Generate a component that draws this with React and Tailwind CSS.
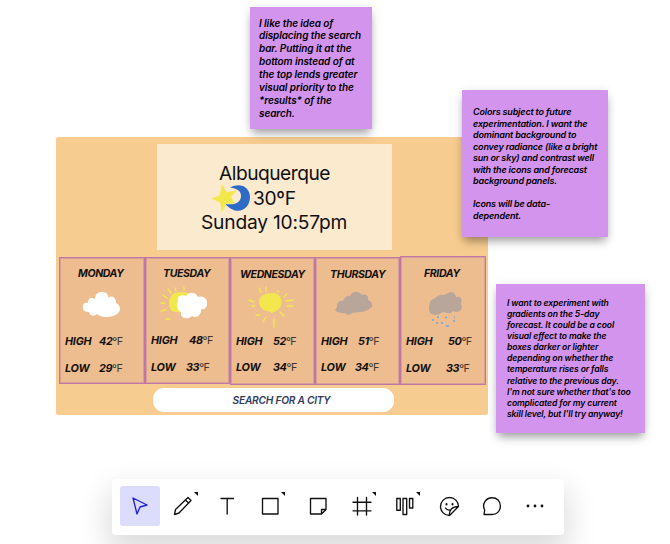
import React from "react";

function Cloud() {
  return (
    <svg width="40" height="28" viewBox="0 0 40 28" fill="#fff">
      <path d="M1 17C0 13 3 11 6 12C6 7 9 6 13 8C13 2 17 1 20 1C25 1 27 4 26 7C30 4 34 6 34 12C38 14 39 18 37 21C34 25 29 26 24 26C20 26 17 25 15 23C12 26 8 25 7 21C4 21 1 20 1 17Z" />
    </svg>
  );
}

function PartlySunny() {
  return (
    <svg width="50" height="36" viewBox="0 0 50 36">
      <g stroke="#f2e74d" strokeWidth="1.3" strokeLinecap="round">
        <path d="M24 1V4M15 2L16 5M8 3L11 7M3 9L7 12M1 17H5M1 25L6 24M6 33H10" />
      </g>
      <path d="M9 16C10 8 15 6 22 6C29 6 31 9 31 15C30 24 24 27 17 26C10 26 9 22 9 16Z" fill="#f2e74d" />
      <path d="M18 15C17 10 21 8 26 10C29 5 36 6 38 11C43 9 48 13 47 18C47 22 44 24 41 23C42 29 36 33 32 30C28 34 20 33 21 26C17 24 16 19 18 15Z" fill="#fff" />
    </svg>
  );
}

function Sun() {
  return (
    <svg width="48" height="44" viewBox="0 0 48 44">
      <path d="M12.5 14C15 9 21 8 26 8C32 8 35 13 34.5 18C34 24 29 26 25 28L21 26C15 26 11 20 12.5 14Z" fill="#f2e74d" />
      <path d="M12 3L14 7M19 2V6M31 6L32 7M40 9L37 12M46 15L39 16M46 21H40M33 27L37 31M27 34V42M19 32L16 37M13 30H9M8 21H5M2 15L7 17" stroke="#f2e74d" strokeWidth="1.4" strokeLinecap="round" />
    </svg>
  );
}

function GreyCloud() {
  return (
    <svg width="40" height="27" viewBox="0 0 40 27" fill="#b8a69b">
      <path d="M1 20C3 18 3 17 3 15C4 12 6 10 9 11C10 8 12 6 16 6C18 1 24 0 28 5C33 3 35 8 34 10C37 11 39 14 38 17C35 19 33 21 28 22C23 22 20 23 18 23C16 25 13 26 11 23C7 23 3 23 1 20Z" />
    </svg>
  );
}

function Rain() {
  return (
    <svg width="36" height="38" viewBox="0 0 36 38">
      <path d="M2 23C0 18 1 9 6 9C9 7 11 4 15 5C19 5 22 0 26 3C28 5 27 7 29 7C34 6 34 11 33 14C35 18 33 22 28 22C26 21 24 21 23 23C20 24 17 22 15 22C11 24 8 27 2 23Z" fill="#b8a69b" />
      <path d="M5 29V31M9 27H11M8 33H10M13 33H15M17 27.5H19M18 36H21M26 27.5H27M25 31H27" stroke="#6ea5e4" strokeWidth="1.5" />
    </svg>
  );
}

function StarMoon() {
  return (
    <svg width="42" height="31" viewBox="0 0 42 31">
      <path d="M19 4.5C29-1 39 4 39 14C39 27 25 34 14 20.5C22 23 30 20 30 13C30 8 27 6 19 4.5Z" fill="#2d6bc5" />
      <path d="M11 1L15.5 9L26 7.5L20 13.5L23.5 20.5L15.5 20.5L11 29L9 19.5L0 15.5L8.5 12.5Z" fill="#f2e74d" />
    </svg>
  );
}

const days = [
  { name: "MONDAY", Icon: Cloud, high: "42", low: "29", card: "mt-px h-[127px] w-[86px] pt-[10px]", title: "pl-[13px]", icon: "h-[56px] pl-[17px] pt-[11px]", highGap: "w-[34px]", lowGap: "w-[34px]", rowGap: "gap-[15px]" },
  { name: "TUESDAY", Icon: PartlySunny, high: "48", low: "33", card: "mt-px h-[127px] w-[85px] pt-[10px]", title: "pl-[12px]", icon: "h-[55px] pl-[9px] pt-[6px]", highGap: "w-[38px]", lowGap: "w-[35px]", rowGap: "gap-[15px]" },
  { name: "WEDNESDAY", Icon: Sun, high: "52", low: "34", card: "mt-px h-[128px] w-[85px] pt-[11px]", title: "pl-1", icon: "h-[55px] pl-[11px] pt-[4px]", highGap: "w-[37px]", lowGap: "w-[37px]", rowGap: "gap-[14px]" },
  { name: "THURSDAY", Icon: GreyCloud, high: "51", low: "34", card: "mt-px h-[128px] w-[85px] pt-[11px]", title: "pl-[9px]", icon: "h-[55px] pl-[13px] pt-[9px]", highGap: "w-[37px]", lowGap: "w-[34px]", rowGap: "gap-[14px]" },
  { name: "FRIDAY", Icon: Rain, high: "50", low: "33", card: "h-[129px] w-[86px] pt-[11px]", title: "pl-[18px]", icon: "h-[56px] pl-[22px] pt-[10px]", highGap: "w-[42px]", lowGap: "w-[40px]", rowGap: "gap-[15px]" },
];

function Temp({ label, value, gap }) {
  return (
    <div className="flex h-3 whitespace-nowrap">
      <span className={`${gap} shrink-0 font-bold italic tracking-[-0.2px]`}>{label}</span>
      <span className="tracking-[-0.4px]"><b className="font-bold italic">{value}</b><span className="text-[#40362f]">ºF</span></span>
    </div>
  );
}

function DayCard({ day }) {
  const { Icon } = day;
  return (
    <section className={`shrink-0 border border-[#bf78a5] bg-[#edbd90] pl-[5px] shadow-[inset_0_0_0_1px_rgba(191,120,165,0.45)] ${day.card}`}>
      <h2 className={`h-3 whitespace-nowrap text-[10.5px] font-bold italic tracking-[-0.35px] ${day.title}`}>{day.name}</h2>
      <div className={day.icon}><Icon /></div>
      <div className={`flex flex-col ${day.rowGap}`}>
        <Temp label="HIGH" value={day.high} gap={day.highGap} />
        <Temp label="LOW" value={day.low} gap={day.lowGap} />
      </div>
    </section>
  );
}

function Note({ lines, className }) {
  return (
    <article className={`absolute bg-[#d394ee] font-semibold italic text-black shadow-[0_6px_9px_-2px_rgba(0,0,0,0.35),0_0_10px_rgba(0,0,0,0.07)] ${className}`}>
      {lines.map((line, i) => <p key={i} className="whitespace-pre">{line || " "}</p>)}
    </article>
  );
}

const iconPaths = [
  <path d="M5 4L19 11L12 13L9 20Z" />,
  <path d="M3.5 20.5L4.5 15.5L17 3.5L20 6.5L8 19ZM14.5 6L17.5 9" />,
  <path d="M6 4.5H18.5M12.2 4.5V20" />,
  <path d="M4.5 4.5H20V20H4.5Z" />,
  <path d="M4.5 4.5H20V15.5L15.5 20H4.5ZM20 15.5H15.5V20" />,
  <path d="M7.5 3.5V21M16.5 3.5V21M3 8.2H21M3 16.8H21" />,
  <path d="M3.8 4.5H7.3V16.3H3.8ZM10 4.5H13.7V20.5H10ZM16.5 4.5H19.8V14H16.5Z" />,
  <g><path d="M12.5 21.5A9 9 0 1 1 21.5 12.5L12.5 21.5C12 16 15 12.5 21.5 12.5" /><path d="M8.5 14Q10 16.5 13 16" /><path d="M9.5 10V10.5M15.5 10V10.5" strokeWidth="2" /></g>,
  <path d="M4 20.5L4.7 16C1.5 10 6 3.7 12 3.7C17 3.7 20.4 7 20.4 12C20.4 17 17 20.5 12 20.5Z" />,
  <g fill="currentColor" stroke="none"><circle cx="5" cy="12" r="1.4" /><circle cx="12" cy="12" r="1.4" /><circle cx="19" cy="12" r="1.4" /></g>,
];

const tools = [
  { label: "Select", cell: "w-10", active: true },
  { label: "Pen", cell: "w-[46px]", menu: "right-[8px]" },
  { label: "Text", cell: "w-[41px]" },
  { label: "Shape", cell: "w-[46px]", menu: "right-[8px]" },
  { label: "Note", cell: "w-[49px]" },
  { label: "Frame", cell: "w-[39px]", menu: "right-[5px]" },
  { label: "Cards", cell: "w-[48px]", menu: "right-[9px]" },
  { label: "Sticker", cell: "w-[39px]" },
  { label: "Comment", cell: "w-[47px]" },
  { label: "More", cell: "w-10" },
];

export default function App() {
  return (
    <main className="relative h-[544px] w-[670px] overflow-hidden bg-white font-['Inter','Liberation_Sans',sans-serif]">
      <div className="absolute left-[56px] top-[137px] flex h-[278px] w-[432px] flex-col rounded-[2px] bg-[#f6cc90] pt-[7px]">
        <header className="ml-[101px] h-[106px] w-[235px] bg-[#fceacf] pt-[17px] text-[19.2px] leading-[24.5px] text-[#101014]">
          <p className="ml-[62px] tracking-[-0.5px]">Albuquerque</p>
          <div className="ml-[54px] flex h-[24.5px]">
            <span className="-mt-[3px] w-[42px] shrink-0"><StarMoon /></span>
            <span className="tracking-[-0.3px]">30ºF</span>
          </div>
          <p className="ml-[44px] whitespace-nowrap tracking-[-0.2px]">Sunday 10:57pm</p>
        </header>
        <div className="ml-[3px] mt-[6px] flex h-[129px] text-[10.8px] leading-3 text-[#14110f]">
          {days.map((day) => <DayCard key={day.name} day={day} />)}
        </div>
        <button className="ml-[97px] mt-[3px] h-6 w-[241px] rounded-[11px] bg-white pl-[16px] text-[10.2px] font-semibold italic leading-6 tracking-[-0.25px] text-[#303b5b]">SEARCH FOR A CITY</button>
      </div>

      <Note
        className="left-[250px] top-[7px] h-[122px] w-[122px] pl-[9px] pt-[9.5px] text-[10px] leading-[12.95px] tracking-[-0.1px]"
        lines={["I like the idea of", "displacing the search", "bar. Putting it at the", "bottom instead of at", "the top lends greater", "visual priority to the", "*results* of the", "search."]}
      />
      <Note
        className="left-[462px] top-[90px] h-[147px] w-[146px] pl-[11px] pt-[16px] text-[9px] leading-[11.55px] tracking-[-0.17px]"
        lines={["Colors subject to future", "experimentation. I want the", "dominant background to", "convey radiance (like a bright", "sun or sky) and contrast well", "with the icons and forecast", "background panels.", "", "Icons will be data-", "dependent."]}
      />
      <Note
        className="left-[496px] top-[284px] h-[149px] w-[149px] pl-[11px] pt-[13.5px] text-[8.6px] leading-[11.15px] tracking-[-0.12px]"
        lines={["I want to experiment with", "gradients on the 5-day", "forecast. It could be a cool", "visual effect to make the", "boxes darker or lighter", "depending on whether the", "temperature rises or falls", "relative to the previous day.", "I'm not sure whether that's too", "complicated for my current", "skill level, but I'll try anyway!"]}
      />

      <nav className="absolute left-[112px] top-[479px] flex h-[56px] w-[452px] items-center rounded-[4px] bg-white pb-[2px] pl-2 shadow-[0_14px_30px_4px_rgba(0,0,0,0.14)]">
        {tools.map((tool, i) => (
          <button key={tool.label} aria-label={tool.label} className={`relative flex h-10 shrink-0 items-center justify-center ${tool.cell} ${tool.active ? "rounded-[3px] bg-[#dcdcfc] text-[#2020e0]" : "text-[#111]"}`}>
            <svg width="24" height="24" viewBox="0 0 24 24" fill="none" stroke="currentColor" strokeWidth="1.35" strokeLinejoin="round" strokeLinecap="round">{iconPaths[i]}</svg>
            {tool.menu && <svg className={`absolute top-[6px] ${tool.menu}`} width="4" height="4" viewBox="0 0 4 4"><path d="M0 0H4V4Z" fill="#111" /></svg>}
          </button>
        ))}
      </nav>
    </main>
  );
}
